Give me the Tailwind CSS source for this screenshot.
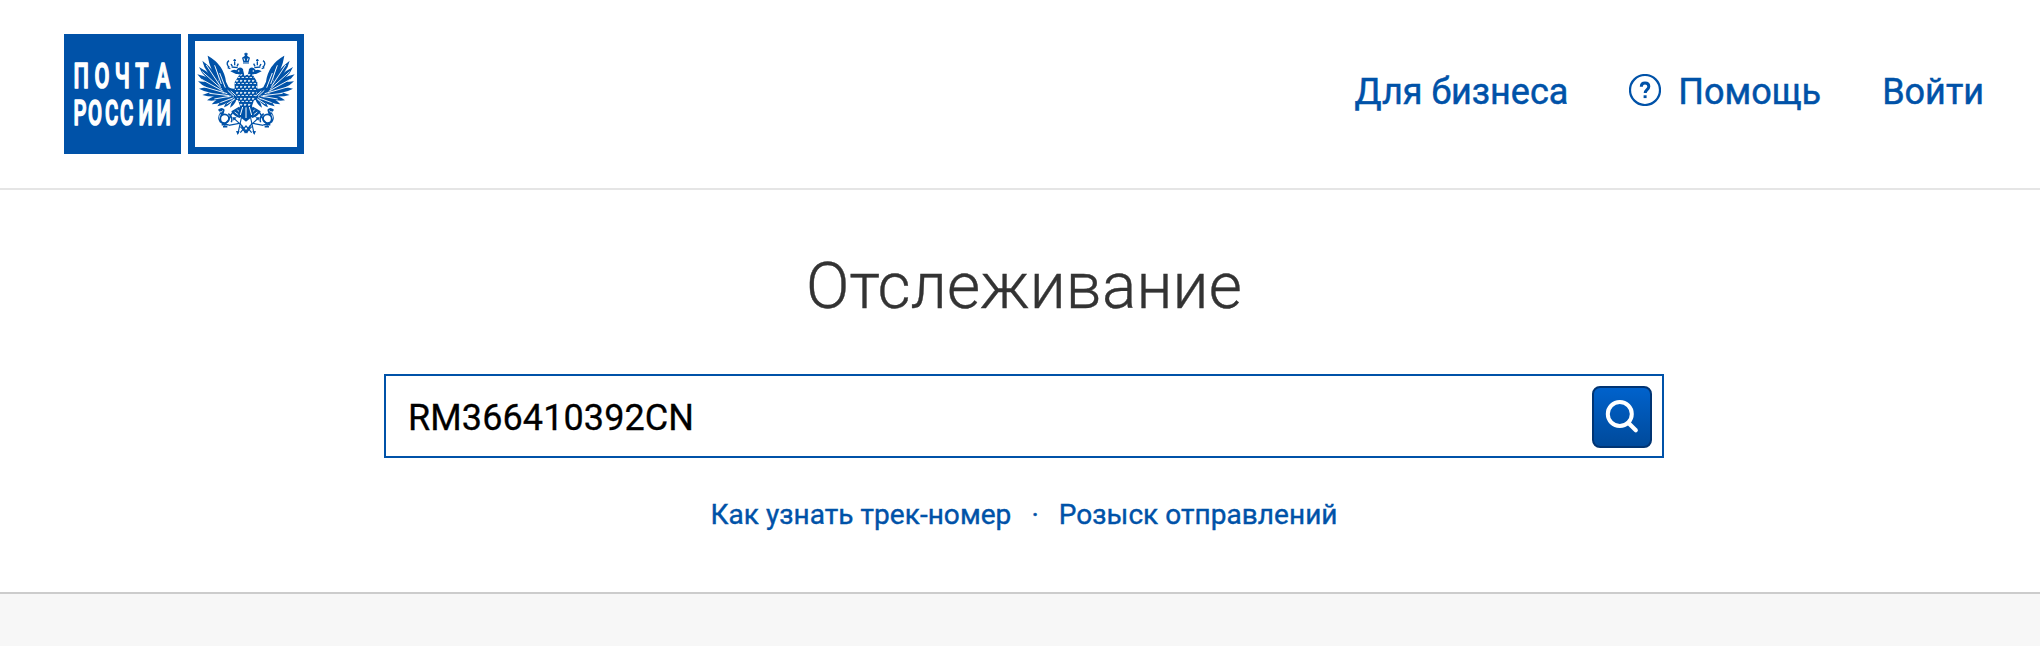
<!DOCTYPE html>
<html lang="ru">
<head>
    <meta charset="UTF-8">
    <meta name="viewport" content="width=device-width, initial-scale=1.0">
    <title>Отслеживание — Почта России</title>
    <script src="https://cdn.jsdelivr.net/npm/@tailwindcss/browser@4"></script>
</head>
<body class="min-h-screen bg-[#f7f7f7] font-['Roboto',sans-serif] text-[#0052a8]">
    <header class="flex h-[190px] justify-between border-b-2 border-[#e5e5e5] bg-white pl-16 pr-14">
        <a href="#" class="mt-[34px] flex h-[120px] gap-[7px]">
            <svg class="h-[120px] w-[117px] bg-[#0052a8]" viewBox="0 0 117 120" fill="#fff" stroke="#fff" stroke-width="1.7" stroke-linejoin="round" font-family="Roboto" font-weight="500" font-size="35">
                <text transform="translate(0 53.5) scale(.62 1)" x="15.5 49 82 115 148">ПОЧТА</text>
                <text transform="translate(0 90.5) scale(.58 1)" x="16.5 41.5 70.5 96.5 128.5 159.5">РОССИИ</text>
            </svg>
            <span class="flex h-[120px] w-[116px] border-[7px] border-[#0052a8] bg-white">
                <svg class="h-[106px] w-[102px]" viewBox="45 33 306 318" fill="#0052a8">
                    <defs>
                        <pattern id="scales" width="12" height="18" patternUnits="userSpaceOnUse">
                            <path d="M0 6q3 8 6 0M6 15q3 8 6 0" fill="none" stroke="#fff" stroke-width="3.2"/>
                        </pattern>
                        <g id="half">
                            <!-- wing -->
                            <path d="M83 77Q104 88 118 153Q90 124 83 77z"/>
                            <path d="M67 92Q74 128 119 162Q111 124 67 92z"/>
                            <path d="M57 111Q70 146 122 170Q102 134 57 111z"/>
                            <path d="M52 133Q74 166 126 178Q102 143 52 133z"/>
                            <path d="M54 154Q78 181 130 184Q104 155 54 154z"/>
                            <path d="M57 176Q88 193 135 190Q98 165 57 176z"/>
                            <path d="M67 195Q99 204 140 195Q104 177 67 195z"/>
                            <path d="M81 211Q110 216 146 199Q110 187 81 211z"/>
                            <path d="M95 223Q125 220 150 203Q119 195 95 223z"/>
                            <path d="M112 229Q138 225 156 205Q129 200 112 229z"/>
                            <path d="M132 232Q151 224 162 206Q139 207 132 232z"/>
                            <path d="M150 233Q165 224 170 207Q155 208 150 233z"/>
                            <path d="M83 77Q131 103 138 155L146 172Q155 178 168 175L177 190V211Q150 210 133 192Q117 178 117 158Q118 118 83 77z"/>
                            <path d="M104 106l20 56M79 105l43 65M67 125l59 53M65 148l65 36M74 171l68 20M88 190l60 7M103 207l51-9M121 218l40-15M140 222l25-16M119 129l17 44M143 181l19 18M152 183l18 16" fill="none" stroke="#fff" stroke-width="2.8"/>
                            <!-- head and crown -->
                            <path d="M198 151L185 139Q179 130 168 132L151 124Q161 116 169 121Q177 107 189 117Q195 122 198 133z"/>
                            <circle cx="176" cy="123" r="2.5" fill="#fff"/>
                            <path d="M157 109l-4-7M171 109l4-8M164 106v-10M155 111l18 2M147 92q-9 6-3 16l4 4M143 113l8 3" fill="none" stroke="#0052a8" stroke-width="4"/>
                            <path d="M160 91h8M164 87v8" stroke="#0052a8" stroke-width="3.5"/>
                            <!-- post horn -->
                            <path d="M114 239q12-10 20 0l-3 12 11 24-7 13-16-11q-9-15 1-29z"/>
                            <path d="M118 246q7 1 10-4M121 253q-6 11 2 19l10 4" fill="none" stroke="#fff" stroke-width="3"/>
                            <circle cx="134" cy="266" r="13" fill="#fff" stroke="#0052a8" stroke-width="5"/>
                            <path d="M182 241Q160 239 153 255Q146 273 134 282M125 284h21M129 290h13M145 251q15 11 9 26" fill="none" stroke="#0052a8" stroke-width="4.5"/>
                            <path d="M154 244q8 16 25 20l14-16-16-18z"/>
                            <path d="M164 246l15 11M172 239l12 14" stroke="#fff" stroke-width="2.5"/>
                            <!-- lightning arrows -->
                            <path d="M146 286L178 280L162 265M180 278L195 307L211 286M184 264L174 310" fill="none" stroke="#0052a8" stroke-width="3.5"/>
                            <path d="M168 303l11 1-6 11zM157 262l13 0-9 10z"/>
                        </g>
                    </defs>
                    <use href="#half"/>
                    <use href="#half" transform="translate(396 0) scale(-1 1)"/>
                    <path d="M176 137Q198 119 220 137L232 157Q234 188 222 211L216 228L222 256L198 275L174 256L180 228L174 211Q162 188 164 157z"/>
                    <path d="M176 137Q198 119 220 137L232 157Q234 188 222 211L214 228H182L174 211Q162 188 164 157z" fill="url(#scales)"/>
                    <path d="M188 231l-7 24M198 232v32M208 231l7 24" stroke="#fff" stroke-width="3"/>
                    <path d="M189 119L198 104L207 119L203 135H193z" fill="#fff"/>
                    <!-- large crown -->
                    <path d="M190 97L186 83L194 78L196 68H200L202 78L210 83L206 97z"/>
                    <path d="M192 72h12M189 99h18" stroke="#0052a8" stroke-width="3"/>
                    <path d="M192 85l2 7M204 85l-2 7" stroke="#fff" stroke-width="3"/>
                    <path d="M181 290l17 18 17-18M181 308l17-20 17 20" fill="none" stroke="#0052a8" stroke-width="3.5"/>
                </svg>
            </span>
        </a>
        <nav class="mt-[71px] flex h-[42px] items-center text-4xl leading-[42px] [-webkit-text-stroke:0.5px]">
            <a href="#">Для бизнеса</a>
            <a href="#" class="ml-[61px] flex items-center">
                <svg class="mr-[17px] mb-1 h-8 w-8" viewBox="0 0 32 32" fill="none" stroke="#0052a8">
                    <circle cx="16" cy="16" r="15" stroke-width="2.2"/>
                    <path d="M12.3 12.8C12.3 10.4 13.8 9 16 9s3.8 1.3 3.8 3.5c0 3-3.6 3.2-3.6 6.5" stroke-width="3"/>
                    <path d="M16.1 21.3v2.8" stroke-width="3"/>
                </svg>
                Помощь
            </a>
            <a href="#" class="ml-[61px]">Войти</a>
        </nav>
    </header>

    <main class="flex h-[404px] flex-col items-center border-b-2 border-[#cccccc] bg-white pl-2">
        <h1 class="mt-[59px] text-[64px] leading-[75px] font-light tracking-[0.2px] text-[#333333] [-webkit-text-stroke:0.4px]">Отслеживание</h1>
        <form class="mt-[50px] flex h-[84px] w-[1280px] items-center justify-between border-2 border-[#0052a8] bg-white pr-[10px] pl-[22px]">
            <input type="text" value="RM366410392CN" class="h-full flex-1 bg-transparent pt-[3px] text-4xl tracking-[0.1px] text-black outline-none [-webkit-text-stroke:0.3px]">
            <button type="button" class="mt-0.5 flex h-[62px] w-[60px] items-center justify-center rounded-lg border-2 border-[#003473] bg-linear-to-b from-[#0062cc] to-[#004a9b]">
                <svg class="h-[58px] w-14" viewBox="0 0 56 58" fill="none" stroke="#fff" stroke-width="4">
                    <circle cx="25.8" cy="26" r="12"/>
                    <path d="M34.5 35l7.3 7.3" stroke-width="4.2" stroke-linecap="round"/>
                </svg>
            </button>
        </form>
        <div class="mt-10 flex text-[28px] leading-[33px] tracking-[0.05px] [-webkit-text-stroke:0.4px]">
            <a href="#">Как узнать трек-номер</a>
            <span class="mx-5">·</span>
            <a href="#">Розыск отправлений</a>
        </div>
    </main>
</body>
</html>
